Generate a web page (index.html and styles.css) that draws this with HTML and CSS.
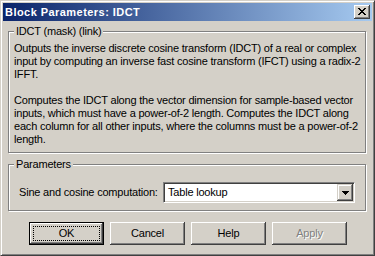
FILE: index.html
```html
<!DOCTYPE html>
<html>
<head>
<meta charset="utf-8">
<link rel="stylesheet" href="styles.css">
</head>
<body>
<div class="window">
  <div class="titlebar">
    <span class="title">Block Parameters: IDCT</span>
    <span class="close"><svg width="8" height="7" viewBox="0 0 8 7" shape-rendering="crispEdges"><path d="M0 0h2v1h-2zM6 0h2v1h-2zM1 1h2v1h-2zM5 1h2v1h-2zM2 2h4v1h-4zM3 3h2v1h-2zM2 4h4v1h-4zM1 5h2v1h-2zM5 5h2v1h-2zM0 6h2v1h-2zM6 6h2v1h-2z" fill="#000"/></svg></span>
  </div>
  <div class="group g1">
    <span class="glabel">IDCT (mask) (link)</span>
    <p class="desc">Outputs the inverse discrete cosine transform (IDCT) of a real or complex<br>input by computing an inverse fast cosine transform (IFCT) using a radix-2<br>IFFT.</p>
    <p class="desc">Computes the IDCT along the vector dimension for sample-based vector<br>inputs, which must have a power-of-2 length. Computes the IDCT along<br>each column for all other inputs, where the columns must be a power-of-2<br>length.</p>
  </div>
  <div class="group g2">
    <span class="glabel">Parameters</span>
    <div class="row">
      <span class="plabel">Sine and cosine computation:</span>
      <div class="combo">
        <span class="value">Table lookup</span>
        <span class="arrow"><svg width="7" height="4" viewBox="0 0 7 4" shape-rendering="crispEdges"><path d="M0 0h7v1H0zM1 1h5v1H1zM2 2h3v1H2zM3 3h1v1H3z" fill="#000"/></svg></span>
      </div>
    </div>
  </div>
  <div class="buttons">
    <div class="btn default"><span class="focus">OK</span></div>
    <div class="btn">Cancel</div>
    <div class="btn">Help</div>
    <div class="btn disabled">Apply</div>
  </div>
</div>
</body>
</html>
```
FILE: styles.css
```css
html, body {
  margin: 0;
  padding: 0;
  background: #D4D0C8;
}
body {
  font-family: "Liberation Sans", Arial, sans-serif;
  font-size: 11px;
  line-height: 13px;
  letter-spacing: -0.2px;
  color: #000;
}
.window {
  width: 375px;
  height: 256px;
  box-sizing: border-box;
  background: #D4D0C8;
  border: 1px solid;
  border-color: #D4D0C8 #404040 #404040 #D4D0C8;
  box-shadow: inset 1px 1px 0 #fff, inset -1px -1px 0 #808080;
  padding: 2px;
  display: flex;
  flex-direction: column;
}
.titlebar {
  height: 18px;
  flex: none;
  background: linear-gradient(to right, #0A246A, #A6CAF0);
  display: flex;
  align-items: center;
  padding-left: 2px;
  padding-right: 2px;
}
.title {
  color: #fff;
  font-weight: bold;
  letter-spacing: 0.45px;
  flex: 1;
}
.close {
  width: 16px;
  height: 14px;
  box-sizing: border-box;
  background: #D4D0C8;
  box-shadow: inset -1px -1px 0 #404040, inset 1px 1px 0 #fff, inset -2px -2px 0 #808080;
  display: flex;
  align-items: center;
  justify-content: center;
  padding-bottom: 1px;
}
.close svg { display: block; }
.group {
  position: relative;
  border: 1px solid #808080;
  box-shadow: inset 1px 1px 0 #fff, 1px 1px 0 #fff;
  margin-left: 5px;
  margin-right: 6px;
}
.glabel {
  position: absolute;
  top: -7px;
  left: 5px;
  padding: 0 2px;
  background: #D4D0C8;
}
.g1 {
  margin-top: 10px;
  padding: 10px 5px 6px 5px;
}
.desc {
  margin: 0;
  white-space: nowrap;
}
.desc + .desc {
  margin-top: 13px;
}
.g2 {
  margin-top: 11px;
  padding: 17px 10px 7px 10px;
}
.row {
  display: flex;
  align-items: center;
}
.plabel {
  flex: none;
}
.combo {
  margin-left: auto;
  width: 192px;
  height: 21px;
  box-sizing: border-box;
  background: #fff;
  border: 1px solid;
  border-color: #808080 #fff #fff #808080;
  box-shadow: inset 1px 1px 0 #404040, inset -1px -1px 0 #D4D0C8;
  padding: 1px;
  display: flex;
  align-items: center;
}
.value {
  flex: 1;
  padding-left: 3px;
}
.arrow {
  width: 16px;
  height: 17px;
  box-sizing: border-box;
  background: #D4D0C8;
  box-shadow: inset -1px -1px 0 #404040, inset 1px 1px 0 #D4D0C8, inset -2px -2px 0 #808080, inset 2px 2px 0 #fff;
  display: flex;
  align-items: center;
  justify-content: center;
}
.arrow svg { display: block; }
.buttons {
  margin-top: 11px;
  padding-left: 26px;
  display: flex;
  gap: 6px;
}
.btn {
  width: 75px;
  height: 23px;
  box-sizing: border-box;
  background: #D4D0C8;
  box-shadow: inset -1px -1px 0 #404040, inset 1px 1px 0 #fff, inset -2px -2px 0 #808080;
  display: flex;
  align-items: center;
  justify-content: center;
}
.btn.default {
  border: 1px solid #000;
  padding: 3px;
}
.focus {
  flex: 1;
  align-self: stretch;
  border: 1px dotted #000;
  display: flex;
  align-items: center;
  justify-content: center;
}
.btn.disabled {
  color: #808080;
  text-shadow: 1px 1px 0 #fff;
}
```
